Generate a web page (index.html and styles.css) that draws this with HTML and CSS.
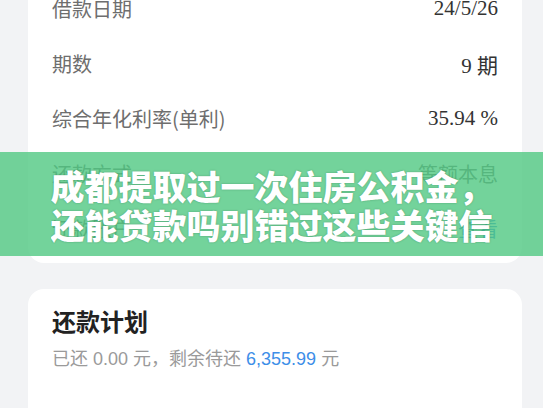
FILE: index.html
```html
<!DOCTYPE html>
<html lang="zh-CN">
<head>
<meta charset="utf-8">
<title>借款详情</title>
<link rel="stylesheet" href="styles.css">
</head>
<body>
<div class="page">
  <main class="content">
    <section class="card info">
      <div class="row"><span class="label">借款金额</span><span class="value">6,000.00</span></div>
      <div class="row"><span class="label">借款日期</span><span class="value">24/5/26</span></div>
      <div class="row"><span class="label">期数</span><span class="value">9 期</span></div>
      <div class="row"><span class="label">综合年化利率(单利)</span><span class="value">35.94 %</span></div>
      <div class="row"><span class="label">还款方式</span><span class="value cjk">等额本息</span></div>
      <div class="row"><span class="label">还款账户</span><span class="value cjk link">查看</span></div>
    </section>
    <section class="card plan">
      <h2 class="plan-title">还款计划</h2>
      <p class="plan-sub">已还 0.00 元，剩余待还 <span class="amount">6,355.99</span> 元</p>
    </section>
  </main>
  <div class="banner">
    <h1 class="banner-title">成都提取过一次住房公积金，还能贷款吗别错过这些关键信息</h1>
  </div>
</div>
</body>
</html>
```
FILE: styles.css
```css
html, body {
  margin: 0;
  padding: 0;
  background: #f2f3f5;
  overflow: hidden;
}
body {
  width: 543px;
  height: 408px;
  font-family: "Liberation Sans", "Noto Sans CJK SC", sans-serif;
}
.page {
  position: relative;
  width: 543px;
  height: 408px;
  overflow: hidden;
}
.content {
  margin-top: -84px;
  padding: 0 21px 0 28px;
  display: flex;
  flex-direction: column;
  gap: 26px;
}
.card {
  background: #ffffff;
  border-radius: 16px;
}
.info {
  padding: 10px 24px 7px 24px;
}
.row {
  height: 55px;
  display: flex;
  align-items: center;
  justify-content: space-between;
}
.label {
  font-family: "Noto Sans CJK SC", sans-serif;
  font-size: 20px;
  color: #6e6e6e;
}
.value {
  font-family: "Liberation Serif", "Noto Sans CJK SC", serif;
  font-size: 21px;
  color: #333333;
}
.value.cjk {
  font-family: "Noto Sans CJK SC", sans-serif;
  font-size: 20px;
  color: #6e6e6e;
}
.value.link {
  color: #3a8ee6;
}
.plan {
  padding: 15px 24px 60px 24px;
}
.plan-title {
  margin: 0;
  font-family: "Noto Sans CJK SC", sans-serif;
  font-size: 24px;
  font-weight: 700;
  line-height: 34px;
  color: #222222;
}
.plan-sub {
  margin: 8px 0 0 0;
  font-size: 18px;
  line-height: 26px;
  color: #9a9a9a;
}
.amount {
  color: #3d8ee8;
}
.banner {
  position: absolute;
  left: 0;
  right: 0;
  top: 152px;
  height: 104px;
  background: rgba(80, 200, 130, 0.8);
  overflow: hidden;
  display: flex;
  justify-content: center;
}
.banner-title {
  margin: 0;
  padding-top: 14px;
  width: 442px;
  flex: none;
  font-family: "Noto Sans CJK SC", sans-serif;
  font-weight: 900;
  font-size: 34px;
  line-height: 39px;
  color: #ffffff;
  text-align: center;
  text-shadow: 0 0 2px rgba(0, 60, 30, 0.35);
  height: 78px;
  overflow: hidden;
}
```
